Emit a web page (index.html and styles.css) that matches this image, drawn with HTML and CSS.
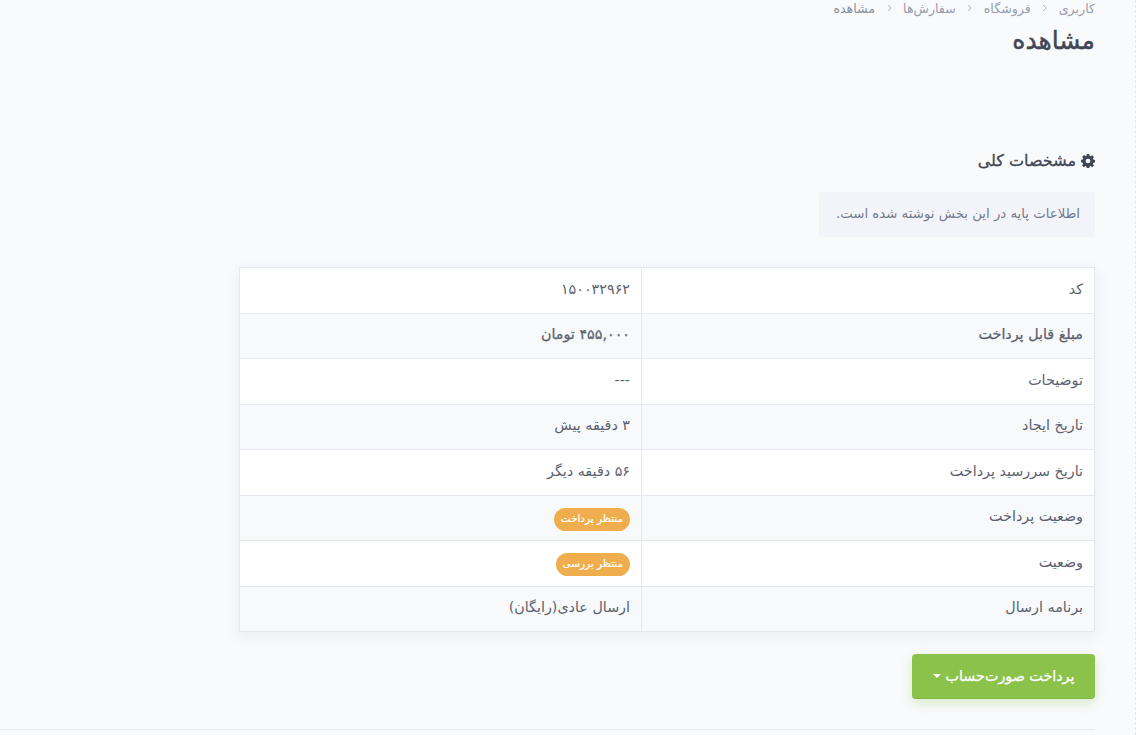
FILE: index.html
```html
<!DOCTYPE html>
<html lang="fa" dir="rtl">
<head>
<meta charset="utf-8">
<title>مشاهده</title>
<link rel="stylesheet" href="styles.css">
</head>
<body>
<main class="page">
  <div class="content">
    <nav class="crumbs">
      <span class="crumb">کاربری</span>
      <svg class="sep" viewBox="0 0 5 8" width="5" height="8" aria-hidden="true"><path d="M1 .8 4.200 4 1 7.200" fill="none" stroke="#aab0bc" stroke-width="1"/></svg>
      <span class="crumb">فروشگاه</span>
      <svg class="sep" viewBox="0 0 5 8" width="5" height="8" aria-hidden="true"><path d="M1 .8 4.200 4 1 7.200" fill="none" stroke="#aab0bc" stroke-width="1"/></svg>
      <span class="crumb">سفارش‌ها</span>
      <svg class="sep" viewBox="0 0 5 8" width="5" height="8" aria-hidden="true"><path d="M1 .8 4.200 4 1 7.200" fill="none" stroke="#aab0bc" stroke-width="1"/></svg>
      <span class="crumb current">مشاهده</span>
    </nav>
    <h1 class="title">مشاهده</h1>
    <h2 class="section">
      <svg class="gear" viewBox="0 0 16 16" width="14" height="14" aria-hidden="true"><path fill="#3f4654" fill-rule="evenodd" d="M6.600 0h2.800l.4 2.100 1.200.5 1.800-1.200 2 2-1.200 1.800.5 1.200 2.100.4v2.800l-2.100.4-.5 1.200 1.200 1.800-2 2-1.800-1.200-1.200.5-.4 2.100H6.600l-.4-2.100-1.200-.5-1.800 1.200-2-2 1.200-1.800-.5-1.200L0 9.400V6.600l2.100-.4.5-1.200-1.200-1.800 2-2 1.800 1.200 1.200-.5zM8 5.300a2.700 2.700 0 1 0 0 5.400 2.700 2.700 0 0 0 0-5.400z"/></svg>
      مشخصات کلی
    </h2>
    <div class="note-row"><p class="note">اطلاعات پایه در این بخش نوشته شده است.</p></div>
    <div class="table-wrap">
      <table class="info">
        <tbody>
          <tr><th>کد</th><td>۱۵۰۰۳۲۹۶۲</td></tr>
          <tr><th class="strong">مبلغ قابل پرداخت</th><td><strong class="strong">۴۵۵,۰۰۰ تومان</strong></td></tr>
          <tr><th>توضیحات</th><td>---</td></tr>
          <tr><th>تاریخ ایجاد</th><td>۳ دقیقه پیش</td></tr>
          <tr><th>تاریخ سررسید پرداخت</th><td>۵۶ دقیقه دیگر</td></tr>
          <tr><th>وضعیت پرداخت</th><td><span class="badge">منتظر پرداخت</span></td></tr>
          <tr><th>وضعیت</th><td><span class="badge">منتظر بررسی</span></td></tr>
          <tr><th>برنامه ارسال</th><td>ارسال عادی(رایگان)</td></tr>
        </tbody>
      </table>
    </div>
    <div class="actions">
      <button class="pay" type="button">پرداخت صورت‌حساب<span class="caret"></span></button>
    </div>
  </div>
  <hr class="rule">
</main>
</body>
</html>
```

FILE: styles.css
```css
* { box-sizing: border-box; }
html, body { height: 100%; }
body {
  margin: 0;
  background: #f9fafc;
  color: #5b616e;
  font-family: "DejaVu Sans", sans-serif;
  font-size: 14px;
  overflow: hidden;
  border-right: 1px dashed #e6e8ee;
}
.page { margin-right: 40px; }
.content { width: 856px; }
.crumbs { display: flex; align-items: center; gap: 11.500px; height: 16px; font-size: 12.600px; color: #979eac; }
.crumb { white-space: nowrap; }
.crumb.current { color: #8a8f9a; }
.sep { flex: none; }
.title { margin: 10px 0 0; font-size: 25px; line-height: 30px; font-weight: 400; color: #3f4654; -webkit-text-stroke: .45px #3f4654; }
.section { margin: 94px 0 0; font-size: 16px; line-height: 22px; font-weight: 400; color: #3f4654; -webkit-text-stroke: .3px #3f4654; display: flex; align-items: center; gap: 5px; }
.note-row { display: flex; margin-top: 20px; }
.note { margin: 0; padding: 0 15px 0 17px; height: 45px; line-height: 43px; background: #f3f4f9; border-radius: 3px; color: #757b8d; font-size: 13.300px; }
.table-wrap { margin-top: 30px; box-shadow: 0 4px 16px rgba(60, 70, 100, .08); border-radius: 2px; }
.info { width: 100%; border-collapse: collapse; table-layout: fixed; background: #fff; }
.info th, .info td { border: 1px solid #e4e8ef; height: 45.500px; padding: 0 11px 3px; text-align: right; font-weight: 400; font-size: 14.300px; vertical-align: middle; }
.info th { width: 453px; }
.info tr:nth-child(even) { background: #f7f9fb; }
.info .strong { font-weight: 400; -webkit-text-stroke: .25px #5b616e; }
.badge { display: inline-block; height: 23px; margin-top: 6px; line-height: 21px; padding: 0 7px; border-radius: 12px; background: #f0ad4e; color: #fff; font-size: 10.400px; -webkit-text-stroke: .2px #fff; vertical-align: middle; }
.actions { display: flex; margin-top: 22px; }
.pay { height: 45px; width: 183px; border: 0; border-bottom: 1px solid #7fb843; border-radius: 4px; background: #8bc34a; color: #fff; font: 400 14.300px "DejaVu Sans", sans-serif; -webkit-text-stroke: .25px #fff; box-shadow: 0 4px 12px rgba(139, 195, 74, .3); display: flex; align-items: center; justify-content: center; gap: 5px; }
.caret { width: 0; height: 0; border-top: 4px solid #fff; border-left: 4px solid transparent; border-right: 4px solid transparent; }
.rule { margin: 30px 0 0; border: 0; border-top: 1px solid #e8ebf0; }
```
